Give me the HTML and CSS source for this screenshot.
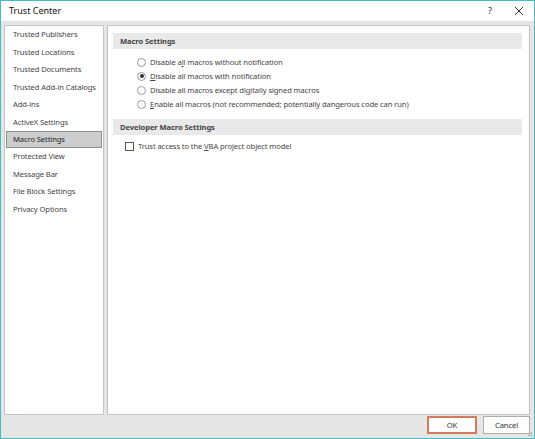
FILE: index.html
```html
<!DOCTYPE html>
<html>
<head>
<meta charset="utf-8">
<link rel="stylesheet" href="styles.css">
</head>
<body>
<div class="window">
  <div class="titlebar">
    <span class="title">Trust Center</span>
    <span class="help">?</span>
    <span class="close">
      <svg width="10" height="10" viewBox="0 0 10 10"><path d="M1 1 L9 9 M9 1 L1 9" stroke="#333" stroke-width="1" fill="none"/></svg>
    </span>
  </div>
  <div class="body">
    <div class="panels">
      <div class="nav">
        <div class="nav-item">Trusted Publishers</div>
        <div class="nav-item">Trusted Locations</div>
        <div class="nav-item">Trusted Documents</div>
        <div class="nav-item">Trusted Add-in Catalogs</div>
        <div class="nav-item">Add-ins</div>
        <div class="nav-item">ActiveX Settings</div>
        <div class="nav-item selected">Macro Settings</div>
        <div class="nav-item">Protected View</div>
        <div class="nav-item">Message Bar</div>
        <div class="nav-item">File Block Settings</div>
        <div class="nav-item">Privacy Options</div>
      </div>
      <div class="content">
        <div class="section-head">Macro Settings</div>
        <div class="radios">
          <div class="radio-row"><span class="radio"></span><span>Disable a<u>l</u>l macros without notification</span></div>
          <div class="radio-row"><span class="radio checked"></span><span><u>D</u>isable all macros with notification</span></div>
          <div class="radio-row"><span class="radio"></span><span>Disable all macros except di<u>g</u>itally signed macros</span></div>
          <div class="radio-row"><span class="radio"></span><span><u>E</u>nable all macros (not recommended; potentially dangerous code can run)</span></div>
        </div>
        <div class="section-head dev">Developer Macro Settings</div>
        <div class="check-row"><span class="checkbox"></span><span>Trust access to the <u>V</u>BA project object model</span></div>
      </div>
    </div>
    <div class="footer">
      <div class="btn ok">OK</div>
      <div class="btn">Cancel</div>
      <svg class="grip" width="5" height="5" viewBox="0 0 5 5"><rect x="3" y="0" width="1" height="1" fill="#a0a0a0"/><rect x="1.5" y="1.5" width="1" height="1" fill="#a0a0a0"/><rect x="3" y="1.5" width="1" height="1" fill="#a0a0a0"/><rect x="0" y="3" width="1" height="1" fill="#a0a0a0"/><rect x="1.5" y="3" width="1" height="1" fill="#a0a0a0"/><rect x="3" y="3" width="1" height="1" fill="#a0a0a0"/></svg>
    </div>
  </div>
</div>
</body>
</html>
```

FILE: styles.css
```css
html, body {
  margin: 0;
  padding: 0;
}
body {
  font-family: "Noto Sans", "Open Sans", sans-serif;
  font-size: 7.6px;
  letter-spacing: -0.1px;
  color: #444;
}
u {
  text-decoration: underline;
  text-underline-offset: 1px;
}
.window {
  width: 535px;
  height: 439px;
  box-sizing: border-box;
  border: 1px solid #3fbfbf;
  display: flex;
  flex-direction: column;
  background: #e6e6e6;
}
.titlebar {
  height: 20px;
  background: #fff;
  display: flex;
  align-items: center;
  position: relative;
  flex: none;
}
.title {
  margin-left: 8px;
  margin-top: -1px;
  color: #111;
  font-size: 9px;
  letter-spacing: 0;
}
.help {
  position: absolute;
  left: 487px;
  top: 3px;
  color: #222;
  font-size: 9px;
}
.close {
  position: absolute;
  left: 513px;
  top: 5px;
  width: 10px;
  height: 10px;
}
.close svg { display: block; }
.body {
  flex: 1;
  display: flex;
  flex-direction: column;
  padding: 4px 4px 0 3px;
}
.panels {
  display: flex;
  gap: 3px;
  height: 390px;
}
.nav {
  width: 100px;
  box-sizing: border-box;
  background: #fff;
  border: 1px solid #c4c4c4;
}
.nav-item {
  height: 17.5px;
  line-height: 17.5px;
  padding-left: 7px;
  margin: 0 1px;
  box-sizing: border-box;
  white-space: nowrap;
}
.nav-item.selected {
  background: #cdcdcd;
  border: 1px solid #8e8e8e;
  padding-left: 6px;
  line-height: 15px;
  height: 17px;
  color: #222;
}
.content {
  flex: 1;
  box-sizing: border-box;
  background: #fff;
  border: 1px solid #c4c4c4;
  padding: 7px 7px 0 5px;
}
.section-head {
  height: 16px;
  line-height: 16px;
  background: #e9e9e9;
  padding-left: 7px;
  font-weight: bold;
  color: #444;
}
.radios {
  margin-top: 6px;
  padding-left: 24px;
}
.radio-row {
  height: 14px;
  display: flex;
  align-items: center;
  white-space: nowrap;
}
.radio {
  width: 9px;
  height: 9px;
  box-sizing: border-box;
  border: 1px solid #999;
  border-radius: 50%;
  background: #fff;
  margin-right: 4px;
  flex: none;
  display: flex;
  align-items: center;
  justify-content: center;
}
.radio.checked::after {
  content: "";
  width: 4px;
  height: 4px;
  border-radius: 50%;
  background: #333;
}
.section-head.dev {
  margin-top: 8px;
}
.check-row {
  margin-top: 4px;
  height: 14px;
  display: flex;
  align-items: center;
  padding-left: 12px;
  white-space: nowrap;
}
.checkbox {
  width: 9px;
  height: 9px;
  box-sizing: border-box;
  border: 1px solid #555;
  background: #fff;
  margin-right: 4px;
  flex: none;
}
.footer {
  margin-top: 1px;
  height: 18px;
  display: flex;
  justify-content: flex-end;
  gap: 6px;
  position: relative;
}
.btn {
  width: 47px;
  height: 18px;
  box-sizing: border-box;
  border: 1px solid #adadad;
  background: #fdfdfd;
  text-align: center;
  line-height: 16px;
  color: #333;
}
.btn.ok {
  width: 50px;
  border: 2px solid #d47a5c;
  line-height: 14px;
}
.grip {
  position: absolute;
  right: -3px;
  bottom: -3px;
}
```
